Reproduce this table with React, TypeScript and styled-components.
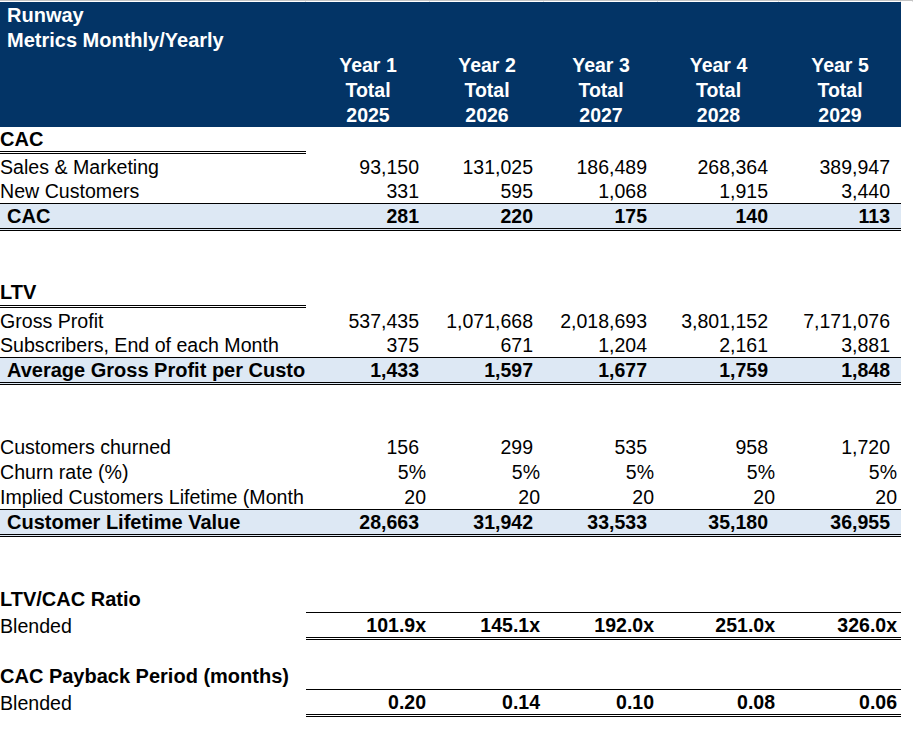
import * as React from 'react'
import styled, {createGlobalStyle} from 'styled-components'

const GlobalStyle = createGlobalStyle`
  body {
    margin: 0;
    background: #FFFFFF;
    font-family: "Liberation Sans", Arial, sans-serif;
    color: #000000;
  }
`

const COLS = '306px 124px 114px 114px 121px 122px'

const Sheet = styled.div`
  width: 913px;
  font-size: 19.5px;
`

const TopStrip = styled.div`
  display: grid;
  grid-template-columns: ${COLS} 12px;
  height: 2px;
  border-top: 1px solid #C4C4C4;
  box-sizing: border-box;
`

const Tick = styled.div`
  border-right: 1px solid #E2E2E2;
`

const Header = styled.header`
  width: 901px;
  background: #033466;
  color: #FFFFFF;
  font-weight: bold;
`

const HeadRow = styled.div`
  display: grid;
  grid-template-columns: ${COLS};
  height: 25px;
  align-items: center;
  white-space: nowrap;
`

const Title = styled.div`
  grid-column: 1 / -1;
  padding: 1px 0 0 7px;
  font-size: 20px;
`

const YearCell = styled.div`
  text-align: center;
  padding-top: 1px;
`

const Row = styled.div<{ $h: number; $total?: boolean }>`
  display: grid;
  grid-template-columns: ${COLS};
  width: 901px;
  height: ${({$h}) => $h}px;
  box-sizing: border-box;
  white-space: nowrap;
  ${({$total}) => $total && `
    background: #DDE8F4;
    border-top: 1px solid #000000;
    border-bottom: 3px double #000000;
    font-weight: bold;
  `}
`

const Label = styled.div<{ $bold?: boolean; $indent?: boolean; $rule?: boolean; $low?: boolean; $plain?: boolean }>`
  display: flex;
  align-items: center;
  overflow: hidden;
  font-size: ${({$plain}) => ($plain ? 19.6 : 20)}px;
  padding-left: ${({$indent}) => ($indent ? 7 : 0)}px;
  padding-top: ${({$low}) => ($low ? 2 : 0)}px;
  font-weight: ${({$bold}) => ($bold ? 'bold' : 'inherit')};
  border-bottom: ${({$rule}) => ($rule ? '3px double #000000' : 'none')};
`

const Val = styled.div<{ $narrow?: boolean; $bold?: boolean; $boxed?: boolean; $low?: boolean }>`
  display: flex;
  align-items: center;
  justify-content: flex-end;
  padding-right: ${({$narrow}) => ($narrow ? 4 : 11)}px;
  padding-top: ${({$low}) => ($low ? 2 : 0)}px;
  font-weight: ${({$bold}) => ($bold ? 'bold' : 'inherit')};
  ${({$boxed}) => $boxed && `
    border-top: 1px solid #000000;
    border-bottom: 3px double #000000;
  `}
`

type Kind = 'blank' | 'section' | 'heading' | 'item' | 'total' | 'ratio'

type Line = {
  kind: Kind
  h: number
  label?: string
  values?: string[]
  narrow?: boolean
}

const years = [
  {n: 1, y: 2025},
  {n: 2, y: 2026},
  {n: 3, y: 2027},
  {n: 4, y: 2028},
  {n: 5, y: 2029},
]

const lines: Line[] = [
  {kind: 'section', h: 27, label: 'CAC'},
  {kind: 'item', h: 23, label: 'Sales & Marketing', values: ['93,150', '131,025', '186,489', '268,364', '389,947']},
  {kind: 'item', h: 26, label: 'New Customers', values: ['331', '595', '1,068', '1,915', '3,440']},
  {kind: 'total', h: 28, label: 'CAC', values: ['281', '220', '175', '140', '113']},
  {kind: 'blank', h: 23},
  {kind: 'blank', h: 26},
  {kind: 'section', h: 28, label: 'LTV'},
  {kind: 'item', h: 23, label: 'Gross Profit', values: ['537,435', '1,071,668', '2,018,693', '3,801,152', '7,171,076']},
  {kind: 'item', h: 26, label: 'Subscribers, End of each Month', values: ['375', '671', '1,204', '2,161', '3,881']},
  {kind: 'total', h: 28, label: 'Average Gross Profit per Custo', values: ['1,433', '1,597', '1,677', '1,759', '1,848']},
  {kind: 'blank', h: 23},
  {kind: 'blank', h: 25},
  {kind: 'item', h: 26, label: 'Customers churned', values: ['156', '299', '535', '958', '1,720']},
  {kind: 'item', h: 25, label: 'Churn rate (%)', values: ['5%', '5%', '5%', '5%', '5%'], narrow: true},
  {kind: 'item', h: 25, label: 'Implied Customers Lifetime (Month', values: ['20', '20', '20', '20', '20'], narrow: true},
  {kind: 'total', h: 28, label: 'Customer Lifetime Value', values: ['28,663', '31,942', '33,533', '35,180', '36,955']},
  {kind: 'blank', h: 23},
  {kind: 'blank', h: 26},
  {kind: 'heading', h: 26, label: 'LTV/CAC Ratio'},
  {kind: 'ratio', h: 28, label: 'Blended', values: ['101.9x', '145.1x', '192.0x', '251.0x', '326.0x']},
  {kind: 'blank', h: 23},
  {kind: 'heading', h: 26, label: 'CAC Payback Period (months)'},
  {kind: 'ratio', h: 28, label: 'Blended', values: ['0.20', '0.14', '0.10', '0.08', '0.06']},
]

const SheetRow = ({line}: { line: Line }) => {
  const {kind, h, label, values = [], narrow} = line
  if (kind === 'blank') return <Row $h={h}/>
  if (kind === 'section' || kind === 'heading') {
    return (
      <Row $h={h}>
        <Label $bold $rule={kind === 'section'}>{label}</Label>
      </Row>
    )
  }
  const total = kind === 'total'
  const ratio = kind === 'ratio'
  const item = kind === 'item'
  return (
    <Row $h={h} $total={total}>
      <Label $indent={total} $low={item} $plain={item || ratio}>{label}</Label>
      {values.map((v, i) => (
        <Val key={i} $narrow={narrow || ratio} $bold={ratio} $boxed={ratio} $low={item}>{v}</Val>
      ))}
    </Row>
  )
}

const App = () => {
  return (
    <Sheet>
      <GlobalStyle/>
      <TopStrip>
        {[0, 1, 2, 3, 4, 5, 6].map(i => <Tick key={i}/>)}
      </TopStrip>
      <Header>
        <HeadRow><Title>Runway</Title></HeadRow>
        <HeadRow><Title>Metrics Monthly/Yearly</Title></HeadRow>
        <HeadRow>
          <div/>
          {years.map(v => <YearCell key={v.n}>Year {v.n}</YearCell>)}
        </HeadRow>
        <HeadRow>
          <div/>
          {years.map(v => <YearCell key={v.n}>Total</YearCell>)}
        </HeadRow>
        <HeadRow>
          <div/>
          {years.map(v => <YearCell key={v.n}>{v.y}</YearCell>)}
        </HeadRow>
      </Header>
      {lines.map((line, i) => <SheetRow key={i} line={line}/>)}
    </Sheet>
  )
}

export default App
